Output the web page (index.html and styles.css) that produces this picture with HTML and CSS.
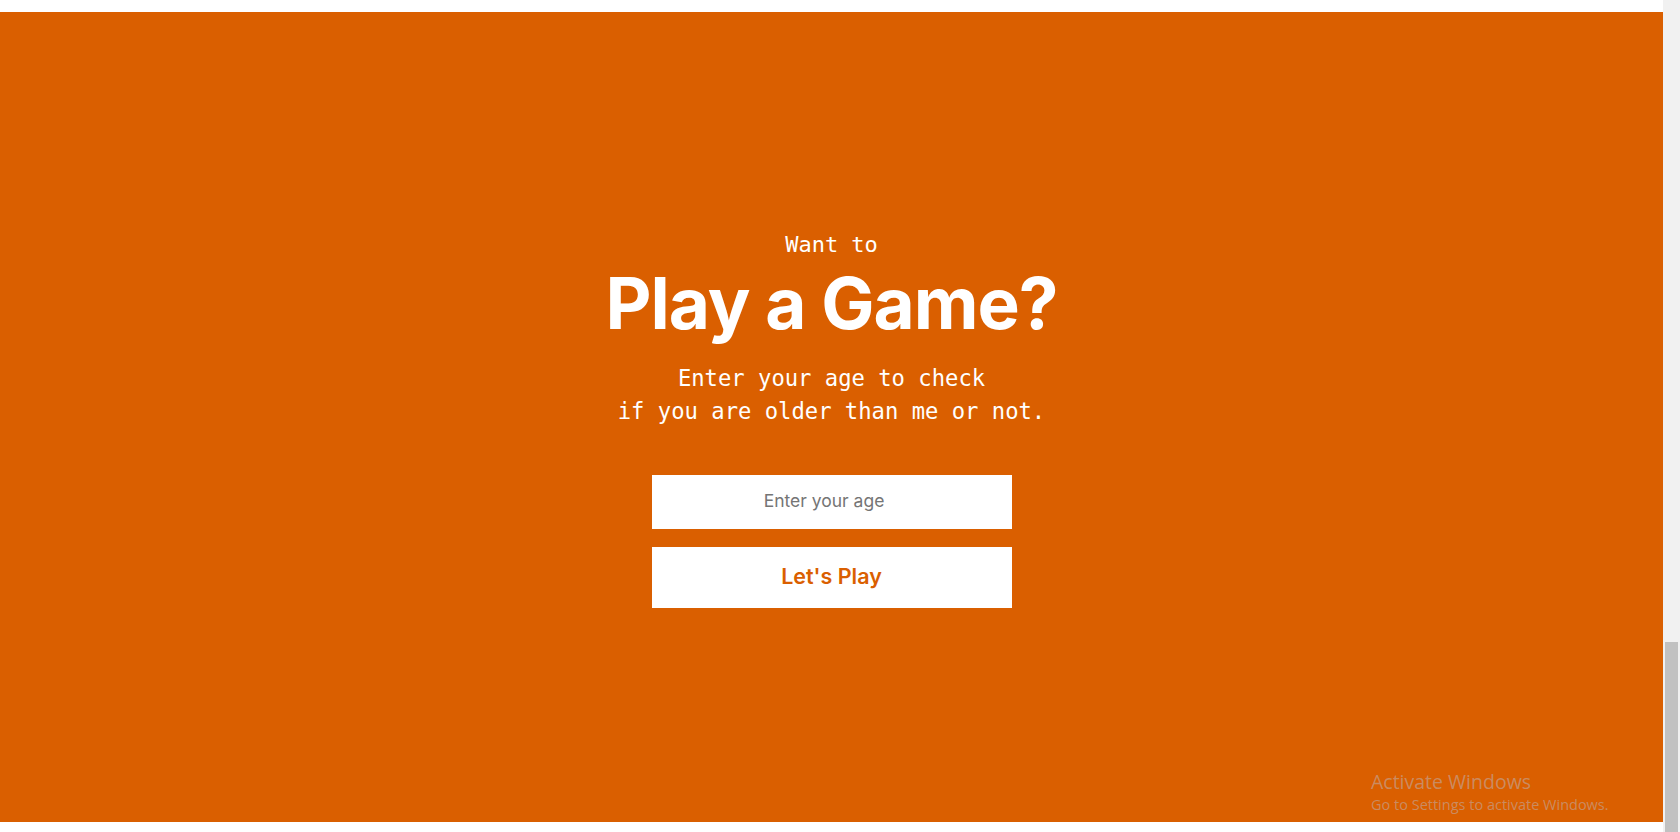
FILE: index.html
```html
<!DOCTYPE html>
<html lang="en">
<head>
<meta charset="utf-8">
<title>Play a Game?</title>
<link rel="stylesheet" href="styles.css">
</head>
<body>
<div class="window">
  <main class="page">
    <section class="hero">
      <p class="kicker">Want to</p>
      <h1 class="title">Play a Game?</h1>
      <p class="lead">Enter your age to check<br>if you are older than me or not.</p>
      <form class="game-form" onsubmit="return false;">
        <input class="age-input" type="text" inputmode="numeric" placeholder="Enter your age">
        <button class="play-btn" type="submit">Let's Play</button>
      </form>
    </section>
  </main>
  <div class="scrollbar"><div class="thumb"></div></div>
  <div class="watermark">
    <div class="wm-title">Activate Windows</div>
    <div class="wm-sub">Go to Settings to activate Windows.</div>
  </div>
</div>
</body>
</html>
```
FILE: styles.css
```css
html, body {
  margin: 0;
  padding: 0;
  height: 100%;
  overflow: hidden;
}
body {
  background: #ffffff;
  font-family: "DejaVu Sans Mono", monospace;
}
.window {
  display: flex;
  height: 832px;
  position: relative;
}
.page {
  flex: 1;
  padding-top: 12px;
  background: #ffffff;
}
.hero {
  height: 810px;
  box-sizing: border-box;
  background: #da5f00;
  display: flex;
  flex-direction: column;
  align-items: center;
  padding-top: 216px;
  color: #ffffff;
  text-align: center;
}
.kicker {
  margin: 0;
  font-family: "DejaVu Sans Mono", monospace;
  font-size: 22px;
  line-height: 33px;
}
.title {
  margin: 6px 0 0;
  font-family: Inter, "Noto Sans", sans-serif;
  font-weight: 700;
  font-size: 71px;
  line-height: 72px;
  letter-spacing: -1px;
}
.lead {
  margin: 23px 0 0;
  font-family: "DejaVu Sans Mono", monospace;
  font-size: 22.2px;
  line-height: 33px;
}
.game-form {
  margin-top: 47px;
  display: flex;
  flex-direction: column;
  gap: 18px;
  width: 360px;
}
.age-input {
  height: 54px;
  border: none;
  outline: none;
  padding: 0 27px 3px 12px;
  box-sizing: border-box;
  background: #ffffff;
  text-align: center;
  font-family: Inter, "Noto Sans", sans-serif;
  font-size: 17.5px;
  color: #333;
}
.age-input::placeholder {
  color: #757575;
}
.play-btn {
  height: 61px;
  border: none;
  padding: 0 0 4px;
  background: #ffffff;
  color: #da5f00;
  font-family: Inter, "Noto Sans", sans-serif;
  font-weight: 600;
  font-size: 21.5px;
  cursor: pointer;
}
.scrollbar {
  width: 17px;
  background: #f1f1f1;
  display: flex;
  flex-direction: column;
  justify-content: flex-end;
  padding: 0 2px;
  box-sizing: border-box;
}
.thumb {
  height: 190px;
  background: #c1c1c1;
}
.watermark {
  position: absolute;
  left: 1371px;
  top: 769px;
  color: rgba(196, 160, 140, 0.7);
  font-family: "Open Sans", "Noto Sans", sans-serif;
}
.wm-title {
  font-size: 19.5px;
  line-height: 26px;
}
.wm-sub {
  font-size: 14.5px;
  line-height: 20px;
}
```
